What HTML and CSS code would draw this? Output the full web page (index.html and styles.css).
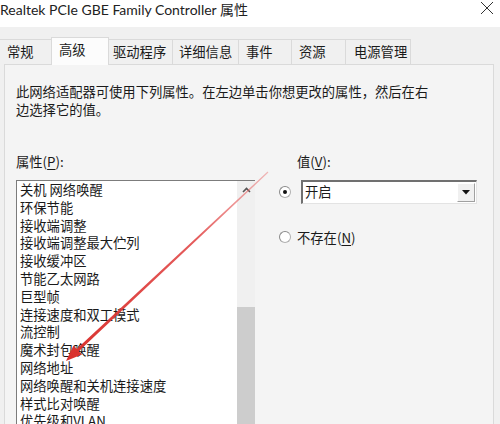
FILE: index.html
```html
<!DOCTYPE html>
<html lang="zh-CN">
<head>
    <meta charset="UTF-8">
    <meta name="viewport" content="width=device-width, initial-scale=1.0">
    <title>Realtek PCIe GBE Family Controller 属性</title>
    <link rel="stylesheet" href="styles.css">
</head>
<body>
    <div class="titlebar">
        <span class="title">Realtek PCIe GBE Family Controller 属性</span>
        <svg class="close" viewBox="0 0 14 14" width="14" height="14">
            <path d="M1 1 L13 13 M13 1 L1 13" stroke="#333" stroke-width="1" fill="none"/>
        </svg>
    </div>
    <div class="tabs">
        <div class="tab">常规</div>
        <div class="tab active">高级</div>
        <div class="tab">驱动程序</div>
        <div class="tab">详细信息</div>
        <div class="tab">事件</div>
        <div class="tab">资源</div>
        <div class="tab">电源管理</div>
    </div>
    <div class="panel">
        <p class="intro">此网络适配器可使用下列属性。在左边单击你想更改的属性，然后在右<br>边选择它的值。</p>
        <div class="props">
            <div class="col-left">
                <div class="label">属性(<u>P</u>):</div>
                <div class="listbox">
                    <ul class="items">
                        <li>关机 网络唤醒</li>
                        <li>环保节能</li>
                        <li>接收端调整</li>
                        <li>接收端调整最大伫列</li>
                        <li>接收缓冲区</li>
                        <li>节能乙太网路</li>
                        <li>巨型帧</li>
                        <li>连接速度和双工模式</li>
                        <li>流控制</li>
                        <li>魔术封包唤醒</li>
                        <li>网络地址</li>
                        <li>网络唤醒和关机连接速度</li>
                        <li>样式比对唤醒</li>
                        <li>优先级和VLAN</li>
                    </ul>
                    <div class="scrollbar">
                        <div class="scroll-up">
                            <svg viewBox="0 0 9 6" width="9" height="6">
                                <path d="M1 5 L4.5 1.5 L8 5" stroke="#555" stroke-width="1.6" fill="none"/>
                            </svg>
                        </div>
                        <div class="track"></div>
                        <div class="thumb"></div>
                    </div>
                </div>
            </div>
            <div class="col-right">
                <div class="label value-label">值(<u>V</u>):</div>
                <div class="option">
                    <span class="radio checked"></span>
                    <div class="combo">
                        <span class="combo-text">开启</span>
                        <span class="drop">
                            <svg viewBox="0 0 8 5" width="8" height="5">
                                <path d="M0 0 L8 0 L4 4.5 Z" fill="#111"/>
                            </svg>
                        </span>
                    </div>
                </div>
                <div class="option second">
                    <span class="radio"></span>
                    <span>不存在(<u>N</u>)</span>
                </div>
            </div>
        </div>
    </div>
    <!-- red annotation arrow drawn over the dialog -->
    <svg class="annotation" viewBox="0 0 500 424" width="500" height="424">
        <defs>
            <linearGradient id="fade" x1="268" y1="172" x2="66" y2="361" gradientUnits="userSpaceOnUse">
                <stop offset="0" stop-color="#e86a6a" stop-opacity="0.45"/>
                <stop offset="0.35" stop-color="#e04040" stop-opacity="0.85"/>
                <stop offset="1" stop-color="#d9302c"/>
            </linearGradient>
        </defs>
        <polygon fill="url(#fade)" points="267.6,171.6 268.4,172.4 78.8,351.3 82,354.6 66,361 73.5,345.6 76.6,348.9"/>
    </svg>
</body>
</html>
```

FILE: styles.css
```css
body {
    margin: 0;
    width: 500px;
    height: 424px;
    overflow: hidden;
    position: relative;
    background-color: #f0f0f0;
    font-family: "Microsoft YaHei", "Noto Sans CJK SC", sans-serif;
    font-size: 13.3px;
    color: #1a1a1a;
}
u {
    text-decoration-thickness: 1px;
    text-underline-offset: 2px;
}

/* title bar */
.titlebar {
    height: 27px;
    background: #fff;
    display: flex;
    justify-content: space-between;
}
.title {
    font-family: Lato, "Noto Sans CJK SC", sans-serif;
    font-size: 14px;
    line-height: 20px;
    color: #222;
}
.close {
    margin: 1px 6px 0 0;
}

/* tabs */
.tabs {
    display: flex;
    height: 27px;
    margin-top: 10px;
    position: relative;
    z-index: 1;
}
.tab {
    box-sizing: border-box;
    height: 25px;
    margin-top: 2px;
    margin-left: -1px;
    padding-left: 6px;
    line-height: 24px;
    border: 1px solid #dadada;
    border-bottom: none;
    background: #f0f0f0;
}
.tab:nth-child(1) { width: 53px; margin-left: -1px; padding-left: 7px; }
.tab:nth-child(2) { width: 58px; padding-left: 7px; }
.tab:nth-child(3) { width: 65px; padding-left: 4px; }
.tab:nth-child(4) { width: 67px; }
.tab:nth-child(5) { width: 54px; padding-left: 7px; }
.tab:nth-child(6) { width: 55px; padding-left: 7px; }
.tab:nth-child(7) { width: 66px; padding-left: 8px; }
.tab.active {
    height: 28px;
    margin-top: 0;
    line-height: 23px;
    background: #fcfcfc;
}

/* panel */
.panel {
    height: 400px;
    margin: 0 6px 0 4px;
    padding: 18px 11px 0;
    border: 1px solid #dadada;
    background: #f4f4f4;
}
.intro {
    margin: 0;
    line-height: 18px;
}
.props {
    display: flex;
    margin-top: 34px;
}
.label {
    line-height: 18px;
    margin-bottom: 9px;
}
.col-left {
    width: 239px;
}
.col-right {
    margin-left: 24px;
}
.value-label {
    margin-left: 18px;
}

/* list box */
.listbox {
    display: flex;
    height: 300px;
    border-top: 1px solid #7c7c7c;
    border-left: 1px solid #7c7c7c;
    background: #fff;
}
.items {
    flex: 1;
    margin: 0;
    padding: 0 0 0 3px;
    list-style: none;
    line-height: 17.8px;
    white-space: nowrap;
}
.scrollbar {
    width: 18px;
    display: flex;
    flex-direction: column;
    background: #f0f0f0;
}
.scroll-up {
    height: 18px;
    display: flex;
    align-items: center;
    justify-content: center;
}
.track {
    height: 108px;
}
.thumb {
    flex: 1;
    background: #cdcdcd;
}

/* value controls */
.option {
    display: flex;
    align-items: center;
    height: 24px;
}
.option.second {
    height: 18px;
    margin-top: 24px;
}
.radio {
    box-sizing: border-box;
    width: 12px;
    height: 12px;
    margin-right: 10px;
    border: 1px solid #b0b0b0;
    border-top-color: #8a8a8a;
    border-left-color: #8a8a8a;
    border-radius: 50%;
    background: #fff;
    display: flex;
    align-items: center;
    justify-content: center;
}
.option.second .radio {
    margin-right: 6px;
}
.radio.checked::after {
    content: "";
    width: 4px;
    height: 4px;
    border-radius: 50%;
    background: #111;
}
.combo {
    box-sizing: border-box;
    width: 176px;
    height: 24px;
    display: flex;
    justify-content: space-between;
    border: 1px solid #e3e3e3;
    border-top: 2px solid #707070;
    border-left: 2px solid #707070;
    background: #fff;
}
.combo-text {
    padding-left: 2px;
    line-height: 20px;
}
.drop {
    box-sizing: border-box;
    width: 18px;
    margin: 1px;
    display: flex;
    align-items: center;
    justify-content: center;
    background: #f0f0f0;
    border: 1px solid #a0a0a0;
    border-top-color: #fff;
    border-left-color: #fff;
}

.annotation {
    position: absolute;
    top: 0;
    left: 0;
    pointer-events: none;
}
```
